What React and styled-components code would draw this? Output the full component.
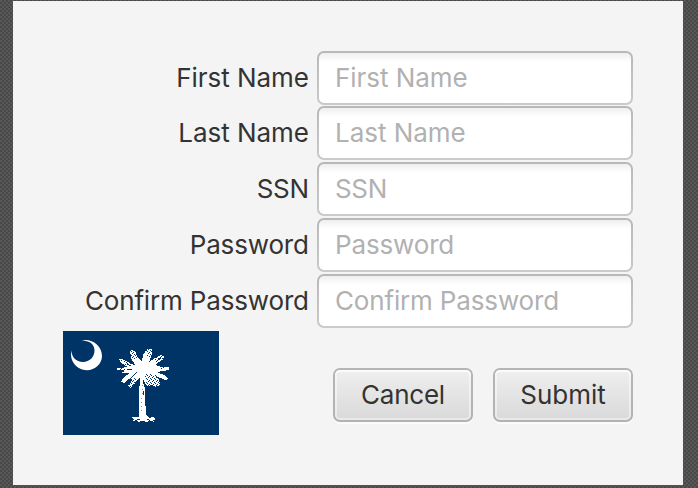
import React from "react";
import styled, { createGlobalStyle } from "styled-components";

const GlobalStyle = createGlobalStyle`
  * { box-sizing: border-box; }
  body {
    margin: 0;
    overflow: hidden;
    font-family: Inter, "Liberation Sans", sans-serif;
  }
`;

const Desktop = styled.div`
  height: 488px;
  padding: 1px 15px 3px 13px;
  background: repeating-conic-gradient(#484848 0 25%, #585858 0 50%) 0 0 / 4px 4px;
`;

const Dialog = styled.form`
  width: 670px;
  height: 484px;
  padding: 50px;
  background: #f4f4f4;
`;

const Fields = styled.div`
  display: grid;
  grid-template-columns: 246px 316px;
  grid-template-rows: 55px repeat(3, 56px) 54px;
  column-gap: 8px;
`;

const Label = styled.label`
  justify-self: end;
  height: 54px;
  font-size: 26px;
  line-height: 54px;
  letter-spacing: ${(p) => p.$spacing}px;
  margin-right: ${(p) => -p.$spacing}px;
  white-space: nowrap;
  color: #333;
`;

const Input = styled.input`
  width: 316px;
  height: 54px;
  padding: 0 16px 2px;
  border: 2px solid transparent;
  border-radius: 7px;
  outline: none;
  background:
    linear-gradient(#efefef, #fff 9px) padding-box,
    linear-gradient(#b8b8b8, #cacaca) border-box;
  font: 26px Inter, "Liberation Sans", sans-serif;
  letter-spacing: ${(p) => p.$spacing}px;
  color: #333;
  &::placeholder { color: #b1b1b1; opacity: 1; }
`;

const Footer = styled.div`
  display: flex;
  align-items: flex-start;
  justify-content: space-between;
  padding-top: 3px;
`;

const Flag = styled.svg`
  display: block;
  width: 156px;
  height: 104px;
`;

const Actions = styled.div`
  display: flex;
  gap: 20px;
  padding-top: 37px;
`;

const Button = styled.button`
  width: 140px;
  height: 54px;
  padding: 0 0 2px;
  border: 2px solid transparent;
  border-radius: 7px;
  background:
    linear-gradient(#efefef, #d9d9d9) padding-box,
    linear-gradient(#b5b5b5, #b2b2b2) border-box;
  box-shadow: inset 0 0 0 2px rgba(255, 255, 255, 0.45), inset 0 2px 0 rgba(255, 255, 255, 0.6), 0 2px 0 #fbfbfb;
  font: 26px Inter, "Liberation Sans", sans-serif;
  letter-spacing: ${(p) => p.$spacing}px;
  color: #333;
`;

const fields = [
  { name: "First Name", spacing: -0.04 },
  { name: "Last Name", spacing: -0.04 },
  { name: "SSN", spacing: -0.35 },
  { name: "Password", spacing: -0.15, type: "password" },
  { name: "Confirm Password", spacing: -0.16, type: "password" },
];

function PalmettoFlag() {
  return (
    <Flag viewBox="0 0 156 104" role="img" aria-label="Palmetto flag">
      <defs>
        <pattern id="leaf" width="4" height="4" patternUnits="userSpaceOnUse">
          <path d="M0 0h1v1H0zM2 1h1v1H2zM1 2h1v1H1zM3 3h1v1H3z" fill="#036" />
        </pattern>
      </defs>
      <path fill="#036" d="M0 0h156v104H0z" />
      <path fill="#fff" d="M18.5 9.5C28 7 39 14 39 25C39 33 32 39.2 24 39.2C14 39.2 6 30 8.5 19.5C8.5 26 13 31 20 31C26.5 31 31.5 26 31.5 19.5C31.5 13 26.5 9.5 18.5 9.5Z" />
      <g fill="#fff" shapeRendering="crispEdges">
        <path d="M67 19L72 20L75 27L79 31L80 24L84 18H89V24L86 31L92 27L97 24L101 25L100 29L92 34L98 36H106V39L94 41L101 44L106 48L102 49L91 44L96 48L97 54L92 56L89 54L84 55L81 50L79 48L76 47L72 52L67 57L65 55L69 49L66 48L61 52L58 51L61 46L67 42L58 42L61 39L54 39V37L65 36L58 32L56 28L60 28L68 33L72 34L68 27Z" />
        <path d="M77 46H81L82 65L83 84L86 87L90 86L93 88L90 89L91 91L86 89L84 91L79 90L75 91L74 89L69 90L71 88L68 87L69 86L76 86L76 65Z" />
      </g>
      <g fill="url(#leaf)" shapeRendering="crispEdges">
        <path d="M66 18H72L74 27L69 28ZM83 17H90V25L84 26ZM95 23H102V29L95 32L91 29ZM82 42L92 44L98 50L95 57L84 56ZM56 27H61L67 32L64 36ZM54 36H62V42H57ZM65 50L73 46L72 53L67 58ZM97 35H102V38H97Z" />
      </g>
      <g stroke="#036" fill="none" shapeRendering="crispEdges">
        <path d="M74 41L66 49M64 39L69 38M94 30L98 27M80 49V53M80 60V64M64 33L68 35M74 88H77M84 88H86" />
      </g>
      <path d="M79.5 54V63M78.5 67V82" stroke="#8398ae" strokeWidth="1" strokeDasharray="1 3" />
    </Flag>
  );
}

export default function App() {
  return (
    <>
      <GlobalStyle />
      <Desktop>
        <Dialog onSubmit={(event) => event.preventDefault()}>
          <Fields>
            {fields.map(({ name, spacing, type = "text" }) => (
              <React.Fragment key={name}>
                <Label htmlFor={name} $spacing={spacing}>{name}</Label>
                <Input id={name} type={type} placeholder={name} $spacing={spacing} />
              </React.Fragment>
            ))}
          </Fields>
          <Footer>
            <PalmettoFlag />
            <Actions>
              <Button type="button" $spacing={-0.25}>Cancel</Button>
              <Button type="submit" $spacing={-0.05}>Submit</Button>
            </Actions>
          </Footer>
        </Dialog>
      </Desktop>
    </>
  );
}
